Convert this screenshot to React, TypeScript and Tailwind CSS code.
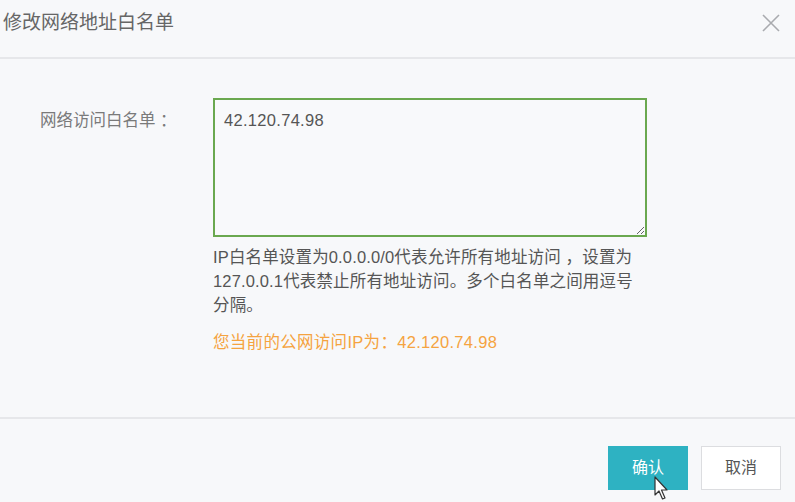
export default function App() {
  return (
    <div
      className="relative flex h-[502px] w-[795px] flex-col overflow-hidden bg-[#f7f8fa] text-[#555]"
      style={{ fontFamily: '"Liberation Sans", "Noto Sans CJK SC", sans-serif' }}
    >
      {/* header */}
      <div className="flex h-[59px] shrink-0 items-start justify-between border-b-2 border-[#e6e7ea] pt-[12px] pr-[12px] pl-[3px]">
        <h2 className="text-[19px] leading-[22px] font-normal text-[#666]">修改网络地址白名单</h2>
        <button className="flex h-[22px] w-[24px] items-center justify-center" type="button">
          <svg width="20" height="20" viewBox="0 0 20 20" fill="none" stroke="#a9abaf" strokeWidth="1.6">
            <path d="M2 2 L18 18 M18 2 L2 18" />
          </svg>
        </button>
      </div>

      {/* body */}
      <div className="flex flex-1 pt-[39px]">
        <label className="w-[213px] shrink-0 pt-[10px] pl-[40px] text-[16.5px] leading-[24px] text-[#7a7a7a]">
          网络访问白名单 ：
        </label>
        <div className="flex w-[434px] flex-col">
          <textarea
            className="h-[139px] w-[434px] resize-y border-2 border-[#6aa84f] bg-[#f8f9fb] px-[9px] py-[8px] text-[16.5px] leading-[24px] tracking-[0.3px] text-[#555] outline-none"
            defaultValue="42.120.74.98"
          />
          <p className="mt-[8px] text-[16.5px] leading-[24px] tracking-[0.15px] text-[#555]">
            IP白名单设置为0.0.0.0/0代表允许所有地址访问 ，设置为
            <br />
            127.0.0.1代表禁止所有地址访问。多个白名单之间用逗号
            <br />
            分隔。
          </p>
          <p className="mt-[13px] text-[16.5px] leading-[24px] tracking-[0.3px] text-[#f5a340]">
            您当前的公网访问IP为：42.120.74.98
          </p>
        </div>
      </div>

      {/* footer */}
      <div className="flex h-[85px] shrink-0 items-start justify-end gap-[13px] border-t-2 border-[#e6e7ea] pt-[27px] pr-[14px]">
        <button className="h-[44px] w-[80px] bg-[#2eb2c2] text-[16px] text-white" type="button">
          确认
        </button>
        <button
          className="h-[44px] w-[80px] border border-[#dcdde0] bg-white text-[16px] text-[#555]"
          type="button"
        >
          取消
        </button>
      </div>

      {/* mouse pointer */}
      <svg className="absolute top-[476px] left-[654px]" width="16" height="26" viewBox="0 0 16 26">
        <path d="M1 1 L1 19 L5 15 L8.5 23 L11 22 L7.5 14 L13 14 Z" fill="#fff" stroke="#333" strokeWidth="1.2" strokeLinejoin="round" />
      </svg>
    </div>
  );
}
